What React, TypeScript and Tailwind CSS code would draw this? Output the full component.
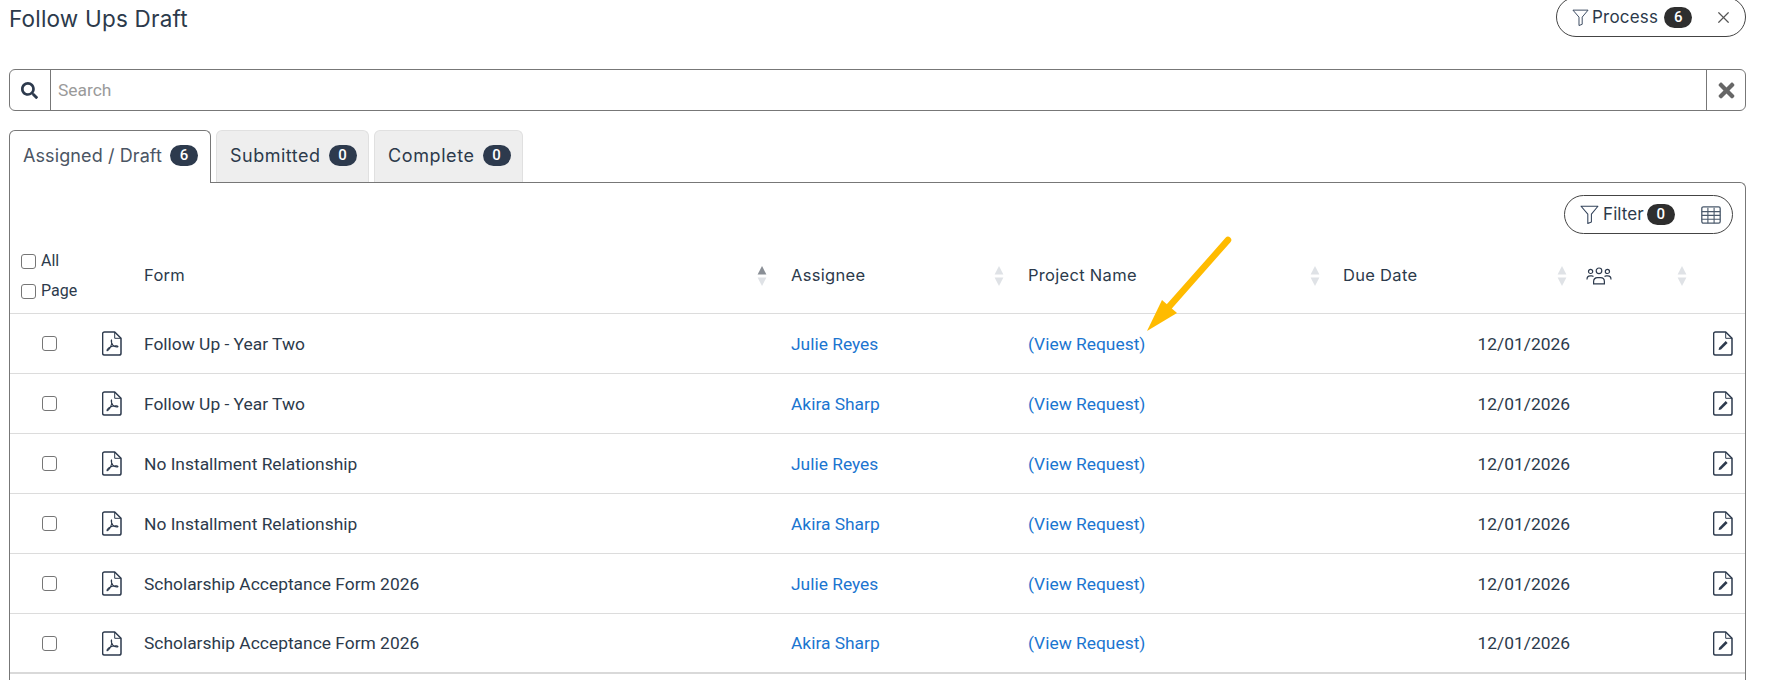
import React from "react";
import { FaSearch, FaTimes } from "react-icons/fa";
import { X } from "lucide-react";

const Funnel = ({ className }: { className?: string }) => (
  <svg viewBox="0 0 18 18" fill="none" stroke="currentColor" strokeWidth="1" strokeLinejoin="round" className={className}>
    <path d="M1 1.2h16l-6.2 7.4v7.6l-3.4 1.3V8.6z" />
  </svg>
);

const Pdf = () => (
  <svg viewBox="0 0 20 25" width="20" height="25" fill="none" stroke="#2d3a4d" strokeWidth="1.5" strokeLinejoin="round">
    <path d="M2.5 1h10.2L19 7.3v14.9a1.9 1.9 0 0 1-1.9 1.9H2.5a1.9 1.9 0 0 1-1.9-1.9V2.9A1.9 1.9 0 0 1 2.5 1z" />
    <path d="M12.7 1v6.3H19" strokeWidth="1" />
    <path d="M9.6 8.6c-.6 1.2.2 4 1.1 5.3 1 1.2 3.4 2.2 4.8 2 .9-.2.4-1-1-1.1-2.2-.2-5.5.7-7.5 2-1.2.9-2.2 2.3-2 2.8.4.6 2.3-1.3 3.4-3.4.9-1.9 1.6-4.7 1.2-6.6" strokeWidth="1.1" />
  </svg>
);

const Edit = () => (
  <svg viewBox="0 0 20 25" width="20" height="25" fill="none" stroke="#2d3a4d" strokeWidth="1.5" strokeLinejoin="round">
    <path d="M2.5 1h10.2L19 7.3v14.9a1.9 1.9 0 0 1-1.9 1.9H2.5a1.9 1.9 0 0 1-1.9-1.9V2.9A1.9 1.9 0 0 1 2.5 1z" />
    <path d="M12.7 1v6.3H19" strokeWidth="1" />
    <path d="M5.6 19l.5-2.3 6.6-6.6 1.9 1.9-6.6 6.6z" fill="#2d3a4d" stroke="none" />
  </svg>
);

const Grid = () => (
  <svg viewBox="0 0 20 18" width="20" height="18" fill="none" stroke="#4b5a6c" strokeWidth="1.3">
    <rect x="0.8" y="0.8" width="18.4" height="16.4" rx="1.6" />
    <path d="M0.8 5.6h18.4M0.8 9.4h18.4M0.8 13.2h18.4M6.9 1.8v15.4M13.1 1.8v15.4" strokeWidth="1.1" />
  </svg>
);

const Users = () => (
  <svg viewBox="0 0 26 18" width="26" height="18" fill="none" stroke="#2d3a4d" strokeWidth="1.2">
    <circle cx="13" cy="3.8" r="2.8" />
    <circle cx="4.6" cy="4.4" r="2.1" />
    <circle cx="21.4" cy="4.4" r="2.1" />
    <path d="M7.6 16.9v-2.2c0-2.3 1.7-4 3.8-4h3.2c2.1 0 3.8 1.7 3.8 4v2.2z" />
    <path d="M1 12.4c0-2 1.3-3.5 3.2-3.5h1.6c.6 0 1.2.2 1.7.5M25 12.4c0-2-1.3-3.5-3.2-3.5h-1.6c-.6 0-1.2.2-1.7.5" />
  </svg>
);

const Sort = ({ up = "#dfe2e6" }: { up?: string }) => (
  <svg viewBox="0 0 10 22" width="10" height="22">
    <path d="M5 1l4.4 8.4H.6z" fill={up} />
    <path d="M5 21l4.4-8.4H.6z" fill="#dfe2e6" />
  </svg>
);

const Badge = ({ n, dark }: { n: number; dark?: boolean }) => (
  <span
    className={`flex h-[21px] w-[28px] items-center justify-center rounded-full text-[15px] font-medium text-white font-['Roboto',sans-serif] ${
      dark ? "bg-[#2e2e2e]" : "bg-[#2d3a4d]"
    }`}
  >
    {n}
  </span>
);

const Box = () => (
  <span className="block h-[15px] w-[15px] rounded-[3px] border border-[#767676] bg-white" />
);

const columns = "grid grid-cols-[134px_647px_237px_315px_243px_1fr]";

const rows = [
  ["Follow Up - Year Two", "Julie Reyes"],
  ["Follow Up - Year Two", "Akira Sharp"],
  ["No Installment Relationship", "Julie Reyes"],
  ["No Installment Relationship", "Akira Sharp"],
  ["Scholarship Acceptance Form 2026", "Julie Reyes"],
  ["Scholarship Acceptance Form 2026", "Akira Sharp"],
];

const heading = "font-['Inter',sans-serif] text-[#2c3a4b]";
const colHead = `flex items-center justify-between text-[16.5px] tracking-[0.3px] ${heading}`;
const cell = "pt-[1px]";

export default function App() {
  return (
    <div className="h-[680px] w-[1765px] overflow-hidden bg-white pl-[9px] pr-[19px] font-['Roboto',sans-serif] text-[17.4px] text-[#2c3a4b]">
      <div className="flex h-[69px] items-start justify-between">
        <h1 className={`mt-[5px] text-[22.5px] leading-[28px] tracking-[0.2px] ${heading}`}>Follow Ups Draft</h1>
        <div className="-mt-[3px] flex h-[40px] w-[190px] items-center rounded-full border border-[#444] pl-[15px] pr-[12px]">
          <Funnel className="h-[17px] w-[17px] text-[#33435a]" />
          <span className={`ml-[3px] pt-[1px] text-[17px] tracking-[0.2px] ${heading}`}>Process</span>
          <span className="ml-[6px]"><Badge n={6} dark /></span>
          <X size={19} strokeWidth={1.5} className="ml-auto text-[#555]" />
        </div>
      </div>

      <div className="flex h-[42px] items-stretch rounded-[6px] border border-[#777]">
        <div className="flex w-[41px] items-center justify-center border-r border-[#777]">
          <FaSearch size={17} className="-ml-[1px] text-[#2d3a4d]" />
        </div>
        <div className="flex flex-1 items-center pl-[7px] pt-[1px] text-[#9a9a9a]">Search</div>
        <div className="flex w-[39px] items-center justify-center border-l border-[#777]">
          <FaTimes size={23} className="text-[#666]" />
        </div>
      </div>

      <div className="relative mt-[19px] flex h-[52px] gap-[5px]">
        <div className="relative z-10 flex h-[53px] w-[202px] items-start gap-[8px] rounded-t-[6px] border border-b-0 border-[#777] bg-white pl-[13px] pt-[14px]">
          <span className={`text-[18px] leading-[22px] tracking-[0.1px] text-[#4b5563] ${heading}`}>Assigned / Draft</span>
          <Badge n={6} />
        </div>
        <div className="flex w-[153px] items-start gap-[8px] rounded-t-[6px] border border-b-0 border-[#e0e0e0] bg-[#eeeeee] pl-[13px] pt-[14px]">
          <span className={`text-[18px] leading-[22px] tracking-[0.5px] ${heading}`}>Submitted</span>
          <Badge n={0} />
        </div>
        <div className="flex w-[149px] items-start gap-[8px] rounded-t-[6px] border border-b-0 border-[#e0e0e0] bg-[#eeeeee] pl-[13px] pt-[14px]">
          <span className={`text-[18px] leading-[22px] tracking-[0.6px] ${heading}`}>Complete</span>
          <Badge n={0} />
        </div>
      </div>

      <div className="relative h-[500px] rounded-tr-[6px] border-x border-t border-[#777]">
        <div className="flex h-[62px] items-start justify-end pr-[12px] pt-[12px]">
          <div className="flex h-[39px] w-[169px] items-center rounded-full border border-[#444] pl-[15px]">
            <Funnel className="h-[19px] w-[19px] text-[#33435a]" />
            <span className={`ml-[4px] text-[17px] tracking-[0.1px] ${heading}`}>Filter</span>
            <span className="ml-[3px]"><Badge n={0} dark /></span>
            <span className="ml-[26px]"><Grid /></span>
          </div>
        </div>

        <div className={`${columns} h-[69px] items-center border-b border-[#dcdcdc] pb-[6px]`}>
          <div className="flex flex-col gap-[12px] pl-[11px] text-[16px] leading-[18px]">
            <label className="flex items-center gap-[5px]"><Box />All</label>
            <label className="flex items-center gap-[5px]"><Box />Page</label>
          </div>
          <div className={`${colHead} pr-[24px]`}><span className="mb-[1px]">Form</span><Sort up="#8a8f96" /></div>
          <div className={`${colHead} pr-[24px]`}><span className="mb-[1px]">Assignee</span><Sort /></div>
          <div className={`${colHead} pr-[23px]`}><span className="mb-[1px]">Project Name</span><Sort /></div>
          <div className={`${colHead} pr-[19px]`}><span className="mb-[1px]">Due Date</span><Sort /></div>
          <div className="flex items-center justify-between pr-[58px]"><Users /><Sort /></div>
        </div>

        {rows.map(([form, who], i) => (
          <div
            key={i}
            className={`${columns} h-[60px] items-center border-b ${
              i === rows.length - 1 ? "border-b-[2px] border-[#d9d9d9]" : "border-[#dcdcdc]"
            }`}
          >
            <div className="flex items-center pl-[32px]">
              <Box />
              <span className="ml-[45px]"><Pdf /></span>
            </div>
            <div className={cell}>{form}</div>
            <div className={`${cell} text-[#1b75d0]`}>{who}</div>
            <div className={`${cell} text-[#1b75d0]`}>(View Request)</div>
            <div className={`${cell} pr-[16px] text-right`}>12/01/2026</div>
            <div className="flex justify-end pr-[12px]"><Edit /></div>
          </div>
        ))}

        <svg className="pointer-events-none absolute left-[1127px] top-[50px]" width="115" height="105" viewBox="0 0 115 105" fill="none">
          <path d="M91 7L30 76" stroke="#ffbb00" strokeWidth="6.5" strokeLinecap="round" />
          <path d="M10 98l15-31 15 13z" fill="#ffbb00" />
        </svg>
      </div>
    </div>
  );
}
